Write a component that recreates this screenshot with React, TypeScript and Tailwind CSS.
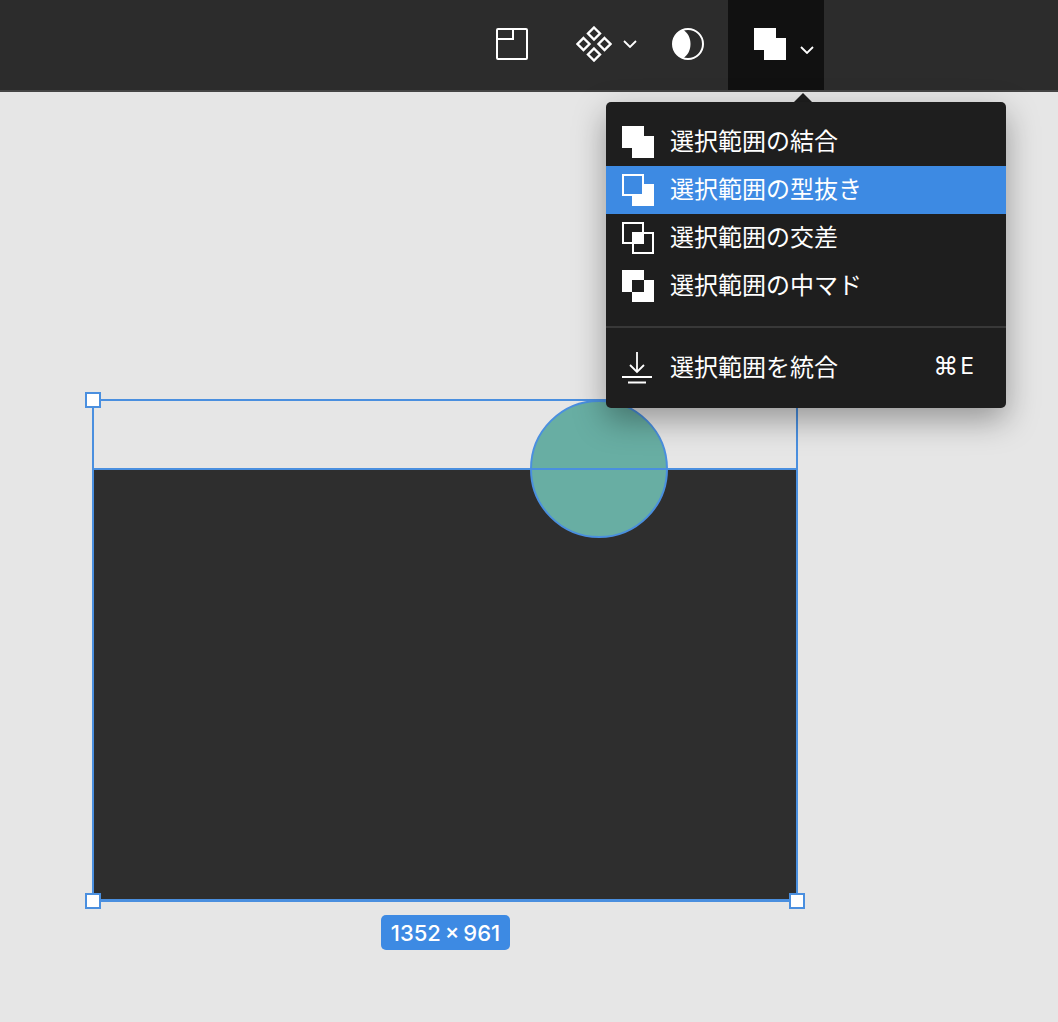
import type { ReactNode } from "react"

const font = { fontFamily: '"Noto Sans CJK JP", "Noto Sans", sans-serif' }

function Chevron() {
  return (
    <svg width="14" height="8" viewBox="0 0 14 8" fill="none" stroke="white" strokeWidth="1.8">
      <path d="M1 1l6 6 6-6" />
    </svg>
  )
}

function FrameIcon() {
  return (
    <svg width="32" height="32" viewBox="0 0 32 32" fill="none" stroke="white" strokeWidth="2">
      <rect x="1" y="1" width="30" height="30" rx="1" />
      <path d="M1 11h16V1" />
    </svg>
  )
}

function ComponentIcon() {
  return (
    <svg width="36" height="36" viewBox="0 0 36 36" fill="none" stroke="white" strokeWidth="2.4">
      <path d="M18 1.500l6 6-6 6-6-6z" />
      <path d="M7.500 12l6 6-6 6-6-6z" />
      <path d="M28.500 12l6 6-6 6-6-6z" />
      <path d="M18 22.500l6 6-6 6-6-6z" />
    </svg>
  )
}

function MaskIcon() {
  return (
    <svg width="32" height="32" viewBox="0 0 32 32" fill="none">
      <circle cx="16" cy="16" r="15" stroke="white" strokeWidth="2" />
      <path d="M11 1.500C16 5 18.500 10 18.500 16C18.500 22 16 27 11 30.500C5 28.500 1 22.800 1 16C1 9.200 5 3.500 11 1.500z" fill="white" />
    </svg>
  )
}

function UnionIcon() {
  return (
    <svg width="32" height="32" viewBox="0 0 32 32" fill="white">
      <path d="M0 0h22v10h10v22H10V22H0z" />
    </svg>
  )
}

function SubtractIcon() {
  return (
    <svg width="32" height="32" viewBox="0 0 32 32" fill="white">
      <path d="M22 10h10v22H10V22h12z" />
      <rect x="1" y="1" width="20" height="20" fill="none" stroke="white" strokeWidth="2" />
    </svg>
  )
}

function IntersectIcon() {
  return (
    <svg width="32" height="32" viewBox="0 0 32 32" fill="none" stroke="white" strokeWidth="2">
      <rect x="10" y="10" width="12" height="12" fill="white" stroke="none" />
      <rect x="1" y="1" width="20" height="20" />
      <rect x="11" y="11" width="20" height="20" />
    </svg>
  )
}

function ExcludeIcon() {
  return (
    <svg width="32" height="32" viewBox="0 0 32 32" fill="white">
      <path fillRule="evenodd" d="M0 0h22v10h10v22H10V22H0zM10 10v12h12V10z" />
    </svg>
  )
}

function FlattenIcon() {
  return (
    <svg width="32" height="32" viewBox="0 0 32 32" fill="none" stroke="white" strokeWidth="1.8">
      <path d="M15 0v20M8 13l7 7 7-7" />
      <path d="M0 25h30M6 30.500h18" />
    </svg>
  )
}

function MenuRow({ icon, label, active }: { icon: ReactNode; label: string; active?: boolean }) {
  return (
    <div className={`flex h-12 items-center gap-4 px-4 text-2xl text-white ${active ? "bg-[#3d8ae3]" : ""}`}>
      {icon}
      <span className="pb-1 leading-none">{label}</span>
    </div>
  )
}

function Handle({ className }: { className: string }) {
  return <div className={`absolute h-4 w-4 border-2 border-[#4a8fdf] bg-white ${className}`} />
}

export default function App() {
  return (
    <div className="relative h-[1022px] w-[1058px] overflow-hidden bg-[#e6e6e6]" style={font}>
      {/* toolbar */}
      <div className="flex h-[92px] items-center border-b-2 border-[#444444] bg-[#2c2c2c] pl-[496px]">
        <div className="flex h-[90px] items-center gap-12 pb-0.5">
          <FrameIcon />
          <div className="flex items-center gap-[11px]">
            <ComponentIcon />
            <Chevron />
          </div>
        </div>
        <div className="ml-[35px] pb-0.5">
          <MaskIcon />
        </div>
        <div className="ml-6 flex h-[90px] w-24 items-center gap-3.5 bg-[#111111] pb-0.5 pl-[26px]">
          <UnionIcon />
          <div className="mt-3">
            <Chevron />
          </div>
        </div>
      </div>

      {/* selection on the canvas */}
      <div className="absolute left-[92px] top-[399px] flex h-[503px] w-[706px] flex-col border-2 border-b-[3px] border-[#4a8fdf]">
        <div className="h-[67px]" />
        <div className="flex-1 border-t-2 border-[#4a8fdf] bg-[#2e2e2e]" />
        <div className="absolute left-[436px] top-[-1px] h-[138px] w-[138px] rounded-full border-2 border-[#4a8fdf] bg-[#68aea3]" />
        <div className="absolute left-[436px] top-[67px] h-0.5 w-[138px] bg-[#4a8fdf]" />
        <Handle className="left-[-9px] top-[-9px]" />
        <Handle className="right-[-9px] top-[-9px]" />
        <Handle className="bottom-[-10px] left-[-9px]" />
        <Handle className="bottom-[-10px] right-[-9px]" />
      </div>
      <div
        className="absolute left-[381px] top-[915px] flex h-[35px] w-[129px] items-center justify-center rounded-[5px] bg-[#3d8ae3] pt-0.5 text-[22px] font-medium text-white [word-spacing:-2px]"
        style={{ fontFamily: "Inter, sans-serif" }}
      >
        1352 × 961
      </div>

      {/* dropdown */}
      <div className="absolute left-[794px] top-[93px] h-0 w-0 border-x-[9px] border-b-[9px] border-x-transparent border-b-[#1e1e1e]" />
      <div className="absolute left-[606px] top-[102px] h-[306px] w-[400px] rounded-[5px] bg-[#1e1e1e] pt-4 shadow-[0_12px_32px_rgba(0,0,0,0.35)]">
        <MenuRow icon={<UnionIcon />} label="選択範囲の結合" />
        <MenuRow icon={<SubtractIcon />} label="選択範囲の型抜き" active />
        <MenuRow icon={<IntersectIcon />} label="選択範囲の交差" />
        <MenuRow icon={<ExcludeIcon />} label="選択範囲の中マド" />
        <div className="mt-4 border-t-2 border-[#383838]" />
        <div className="mt-4 flex h-12 items-center gap-4 px-4 text-2xl text-white">
          <FlattenIcon />
          <span className="pb-1 leading-none">選択範囲を統合</span>
          <span className="ml-auto flex items-center gap-[2px] pb-1 pr-4 leading-none" style={{ fontFamily: '"DejaVu Sans", "Noto Sans", sans-serif' }}>
            <span className="text-[25px]">⌘</span>
            <span className="text-[23px]" style={{ fontFamily: "Inter, sans-serif" }}>E</span>
          </span>
        </div>
      </div>
    </div>
  )
}
